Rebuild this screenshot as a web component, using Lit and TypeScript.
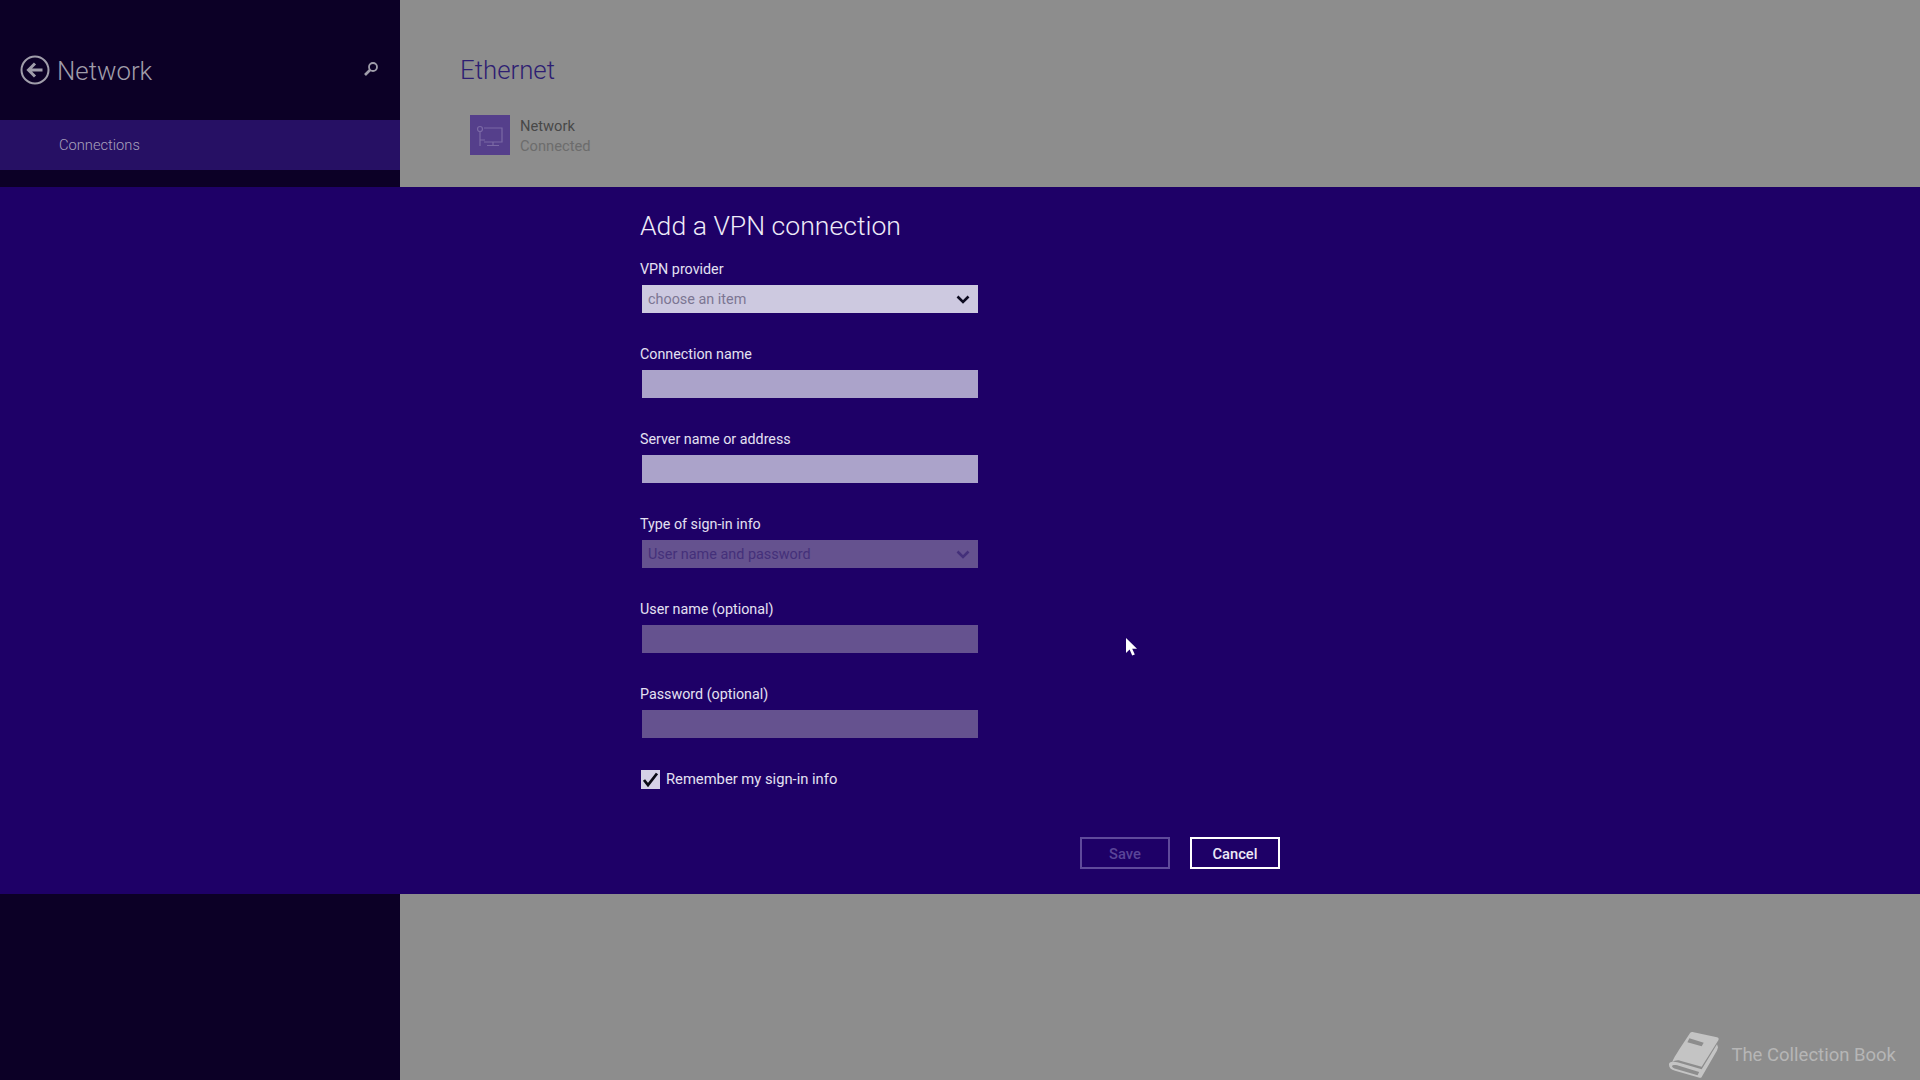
import { LitElement, html, css } from "lit";
import { customElement } from "lit/decorators.js";

const FONT = css`Roboto, "Open Sans", "Liberation Sans", sans-serif`;

@customElement("app-root")
export class AppRoot extends LitElement {
  static styles = css`
    :host { display: block; width: 1920px; height: 1080px; overflow: hidden; position: relative; font-family: ${FONT}; background: #8d8d8d; }
    .page { display: grid; grid-template-columns: 400px 1fr; height: 1080px; }
    .side { background: #0c0026; display: flex; flex-direction: column; }
    .side-head { height: 120px; display: flex; align-items: center; padding: 20px 20px 0 20px; box-sizing: border-box; }
    .back { width: 30px; height: 30px; margin-right: 7px; flex: none; }
    .side-title { font-size: 25.8px; font-weight: 300; color: #a09daa; flex: 1; position: relative; top: 1px; }
    .search { width: 16px; height: 16px; margin-right: 1px; position: relative; top: -1px; }
    .nav-row { height: 50px; background: #261064; color: #a8a0bc; font-size: 14.7px; font-weight: 300; display: flex; align-items: center; padding: 0 0 0 59px; box-sizing: border-box; }
    .main { padding: 56px 0 0 60px; }
    .main-title { font-size: 25.8px; font-weight: 300; color: #2e1e72; line-height: 32px; margin: 0; height: 32px; position: relative; top: -2px; }
    .net { display: flex; margin: 27px 0 0 10px; gap: 10px; }
    .tile { width: 40px; height: 40px; background: #553f8b; display: flex; align-items: center; justify-content: center; }
    .net-text { font-size: 14.7px; line-height: 20px; color: #484848; padding-top: 1px; }
    .net-text div + div { color: #6c6c6c; }
    .band { position: absolute; left: 0; right: 0; top: 187px; height: 707px; background: #1e0067; box-sizing: border-box; padding: 22px 0 0 640px; }
    h1 { margin: 0; font-size: 26.6px; font-weight: 300; color: #eeebf8; line-height: 34px; height: 34px; }
    .form { width: 340px; margin-top: 15px; }
    .field { height: 85px; box-sizing: border-box; }
    .field label { display: block; font-size: 14.3px; line-height: 20px; height: 20px; color: #e4e0f2; position: relative; top: 1px; }
    .box { margin: 7px 0 0 2px; width: 336px; height: 28px; box-sizing: border-box; display: flex; align-items: center; justify-content: space-between; padding: 1px 8px 0 6px; font-size: 14.4px; }
    .box svg { margin-top: -1px; }
    .light { background: #cdc9e0; color: #7c7693; }
    .mid { background: #aba3ca; }
    .dim { background: #65528f; color: #44307a; }
    .check { display: flex; align-items: center; gap: 6px; margin-top: 1px; font-size: 14.75px; color: #e4e0f2; line-height: 20px; }
    .cb { width: 19px; height: 19px; margin-left: 1px; background: #d5d1e6; box-sizing: border-box; display: flex; align-items: center; justify-content: center; }
    .actions { display: flex; gap: 20px; margin: 48px 0 0 440px; width: 200px; }
    .btn { width: 90px; height: 32px; box-sizing: border-box; border: 2px solid #fff; color: #ece9f6; font-size: 14.7px; font-weight: 500; display: flex; align-items: center; justify-content: center; padding-top: 1px; }
    .btn.off { border-color: #5f4a9b; color: #5a4598; }
    .cursor { position: absolute; left: 1125px; top: 637px; width: 13px; height: 20px; }
    .mark { position: absolute; right: 24px; top: 1031px; display: flex; align-items: center; gap: 11px; color: #b6b6b6; font-size: 18.5px; line-height: 47px; }
    .mark span { position: relative; top: 1px; }
  `;

  render() {
    return html`
      <div class="page">
        <aside class="side">
          <div class="side-head">
            <svg class="back" viewBox="0 0 30 30" fill="none" stroke="#a09daa">
              <circle cx="15" cy="15" r="13.5" stroke-width="2" />
              <path d="M22.5 15H9M15 8.5L8.5 15l6.5 6.5" stroke-width="3" />
            </svg>
            <div class="side-title">Network</div>
            <svg class="search" viewBox="0 0 16 16" fill="none" stroke="#a09daa">
              <circle cx="10" cy="6" r="4" stroke-width="1.8" />
              <path d="M7 9l-5 5" stroke-width="2.6" />
            </svg>
          </div>
          <div class="nav-row">Connections</div>
        </aside>
        <main class="main">
          <div class="main-title">Ethernet</div>
          <div class="net">
            <div class="tile">
              <svg width="30" height="26" viewBox="0 0 30 26" fill="none" stroke="#7b69a5" stroke-width="1.2">
                <path d="M9 6h18v14H9M18 20v3M12 23.5h12" />
                <circle cx="5" cy="7" r="2.5" />
                <path d="M5 9.5V24M5 18h5" />
              </svg>
            </div>
            <div class="net-text"><div>Network</div><div>Connected</div></div>
          </div>
        </main>
      </div>

      <section class="band">
        <h1>Add a VPN connection</h1>
        <div class="form">
          <div class="field">
            <label>VPN provider</label>
            <div class="box light">choose an item ${this.chevron("#0d0b20")}</div>
          </div>
          <div class="field">
            <label>Connection name</label>
            <div class="box mid"></div>
          </div>
          <div class="field">
            <label>Server name or address</label>
            <div class="box mid"></div>
          </div>
          <div class="field">
            <label>Type of sign-in info</label>
            <div class="box dim">User name and password ${this.chevron("#44307a")}</div>
          </div>
          <div class="field">
            <label>User name (optional)</label>
            <div class="box dim"></div>
          </div>
          <div class="field">
            <label>Password (optional)</label>
            <div class="box dim"></div>
          </div>
          <div class="check">
            <div class="cb">
              <svg width="17" height="15" viewBox="0 0 17 15" fill="none" stroke="#0a0a14" stroke-width="2.8"><path d="M2 8l4 5L15 1.5" /></svg>
            </div>
            Remember my sign-in info
          </div>
        </div>
        <div class="actions">
          <div class="btn off">Save</div>
          <div class="btn">Cancel</div>
        </div>
      </section>

      <svg class="cursor" viewBox="0 0 13 20"><path d="M1 1v15l3.6-3.4 2.6 6 2.6-1.1-2.6-5.8H12z" fill="#fff" /></svg>

      <div class="mark">
        <svg width="53" height="47" viewBox="0 0 50 46" fill="#c4c4c4">
          <path fill-rule="evenodd" d="M24 1l24 5c2 .5 2 2 1 3.5L33 35 12 29c-3-.8-6 0-8 2 1-4 4-8 7-13L21 3c.7-1.5 1.800-2.300 3-2zM21 7l-2 4 14 4 2-3.500z" />
          <path fill-rule="evenodd" d="M48 13l1 3-1 3-15 26c-.5 1-1.500 1-3 .5L7 39c-4-1.200-6-3-6-6s3-3.500 10-2l22 6.500zM9 33.500c-3-.5-5 0-5 1s1.500 2 4 2.700l21 6 1.500-3z" />
        </svg>
        <span>The Collection Book</span>
      </div>
    `;
  }

  chevron(color: string) {
    return html`<svg width="14" height="9" viewBox="0 0 14 9" fill="none" stroke=${color} stroke-width="2.6"><path d="M1.5 1.500L7 7l5.500-5.500" /></svg>`;
  }
}
